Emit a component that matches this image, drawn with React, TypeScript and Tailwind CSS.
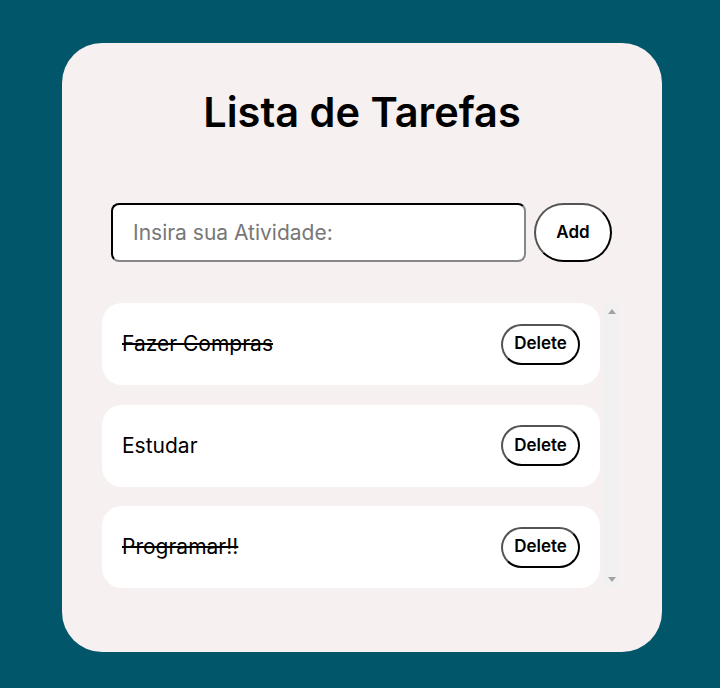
import { useState } from 'react'

type Task = { text: string; done: boolean }

export default function App() {
  const [tasks, setTasks] = useState<Task[]>([
    { text: 'Fazer Compras', done: true },
    { text: 'Estudar', done: false },
    { text: 'Programar!!', done: true },
  ])

  return (
    <div className="min-h-[688px] bg-[#02566a] pl-[62px] pt-[43px] font-['Inter',sans-serif]">
      <div className="flex h-[609px] w-[600px] flex-col rounded-[40px] bg-[#f6f0f0] px-[40px]">
        <h1 className="mt-[45px] text-center text-[41.5px] leading-[48px] font-semibold text-black">
          Lista de Tarefas
        </h1>

        <div className="mt-[67px] flex h-[59px] items-stretch gap-[8px] pl-[9px] pr-[10px]">
          <input
            placeholder="Insira sua Atividade:"
            className="w-[415px] rounded-[8px] border-2 border-[#333] bg-white px-[20px] text-[21px] [border-style:inset] placeholder:text-[#777] focus:outline-none"
          />
          <button className="w-[78px] rounded-full border-2 border-black bg-white text-[17px] font-semibold [border-style:outset]">
            Add
          </button>
        </div>

        <div className="mt-[41px] flex h-[285px] gap-[3px]">
          <ul className="flex w-[498px] flex-col gap-[19.5px] overflow-hidden">
            {tasks.map((t, i) => (
              <li
                key={i}
                className="flex h-[82px] shrink-0 items-center justify-between rounded-[20px] bg-white pl-[20px] pr-[20px]"
              >
                <span
                  onClick={() =>
                    setTasks(tasks.map((x, j) => (j === i ? { ...x, done: !x.done } : x)))
                  }
                  className={`text-[21px] text-black ${t.done ? 'line-through' : ''}`}
                >
                  {t.text}
                </span>
                <button
                  onClick={() => setTasks(tasks.filter((_, j) => j !== i))}
                  className="h-[41px] w-[79px] rounded-full border-2 border-black bg-white text-[17px] font-semibold [border-style:outset]"
                >
                  Delete
                </button>
              </li>
            ))}
          </ul>
          {/* scrollbar track */}
          <div className="flex w-[17px] flex-col items-center justify-between bg-[#f1f1f1] py-[6px]">
            <svg width="8" height="5" viewBox="0 0 8 5">
              <path d="M0 5 L4 0 L8 5 Z" fill="#a3a3a3" />
            </svg>
            <svg width="8" height="5" viewBox="0 0 8 5">
              <path d="M0 0 L4 5 L8 0 Z" fill="#a3a3a3" />
            </svg>
          </div>
        </div>
      </div>
    </div>
  )
}
